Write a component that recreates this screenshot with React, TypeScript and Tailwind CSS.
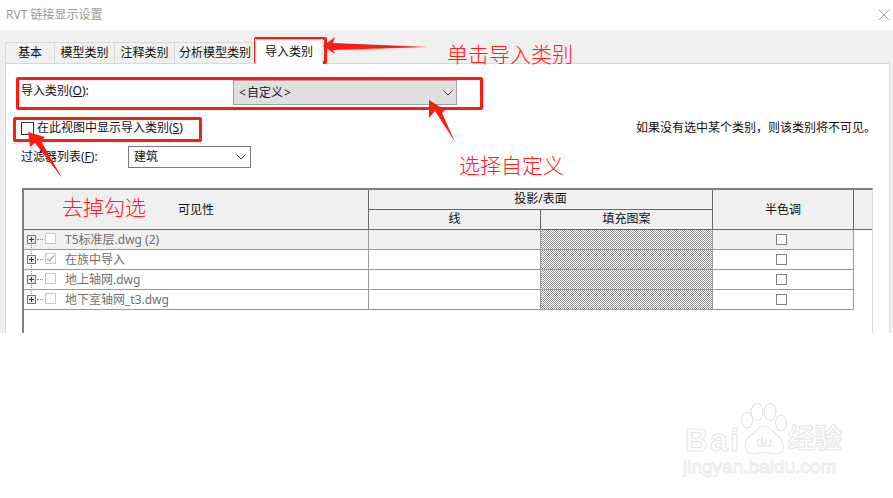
import React from 'react';

const cjk = "font-['Noto_Sans','Noto_Sans_CJK_SC',sans-serif]";

const rows = [
  { name: 'T5标准层.dwg (2)', checked: false, shaded: true },
  { name: '在族中导入', checked: true, shaded: false },
  { name: '地上轴网.dwg', checked: false, shaded: false },
  { name: '地下室轴网_t3.dwg', checked: false, shaded: false },
];

const Chevron = () => (
  <svg width="10" height="6" viewBox="0 0 10 6" fill="none" stroke="#444" strokeWidth="1">
    <path d="M0.5 0.5 L5 5 L9.5 0.5" />
  </svg>
);

const Tab = ({ label, w }: { label: string; w: string }) => (
  <div className={`${w} h-[21px] -mr-px flex items-center justify-center border border-b-0 border-[#d9d9d9] bg-[#f0f0f0] text-xs text-[#111]`}>
    {label}
  </div>
);

// one row of the category tree
const TreeRow = ({ name, checked, shaded, last }: { name: string; checked: boolean; shaded: boolean; last: boolean }) => (
  <div className={`grid grid-cols-[345px_172px_172px_141px] h-5 border-b border-[#999] ${shaded ? 'bg-[#f0f0f0]' : 'bg-white'}`}>
    <div className="relative flex items-center border-r border-[#999]">
      <div className={`absolute left-[7px] top-[6px] w-0 border-l border-dotted border-[#888] ${last ? 'h-[3px]' : 'h-5'}`} />
      <div className="relative ml-[3px] flex h-[9px] w-[9px] items-center justify-center border border-[#777] bg-[#e8e8f0]">
        <div className="absolute h-px w-[5px] bg-[#223a80]" />
        <div className="absolute h-[5px] w-px bg-[#223a80]" />
      </div>
      <div className="ml-px w-[6px] border-t border-dotted border-[#888]" />
      <div className="mb-[3px] ml-[2px] flex h-[11px] w-[11px] items-center justify-center border border-[#c8c8c8] bg-white">
        {checked && (
          <svg width="9" height="9" viewBox="0 0 9 9" fill="none" stroke="#b0b0b0" strokeWidth="1.4">
            <path d="M1 4.5 L3.5 7 L8 1.5" />
          </svg>
        )}
      </div>
      <span className="ml-[9px] text-xs text-[#707070]">{name}</span>
    </div>
    <div className="border-r border-[#999]" />
    <div className="border-r border-[#999] bg-[repeating-conic-gradient(#909090_0_25%,#ffffff_0_50%)] bg-[length:2px_2px]" />
    <div className="flex items-center justify-center border-r border-[#999]">
      <div className="mr-1 h-[11px] w-[11px] border border-[#808080] bg-white" />
    </div>
  </div>
);

export default function App() {
  return (
    <div className={`relative h-[498px] w-[893px] overflow-hidden bg-white ${cjk}`}>
      {/* title bar */}
      <div className="flex h-[30px] items-center justify-between pl-[6px] pr-[3px]">
        <span className="text-xs text-[#9a9a9a]">RVT 链接显示设置</span>
        <svg width="10" height="10" viewBox="0 0 10 10" stroke="#8c8c8c" strokeWidth="0.8" className="mr-px">
          <path d="M0 0 L10 10 M10 0 L0 10" />
        </svg>
      </div>

      {/* dialog body, cut off by the screenshot */}
      <div className="flex h-[303px] flex-col overflow-hidden bg-[#f0f0f0] pl-[5px] pr-[3px]">
        <div className="flex h-[33px] shrink-0 items-end">
          <Tab label="基本" w="w-[50px]" />
          <Tab label="模型类别" w="w-[61px]" />
          <Tab label="注释类别" w="w-[61px]" />
          <Tab label="分析模型类别" w="w-[82px]" />
          <div className="z-10 -mb-px flex h-[25px] w-[68px] items-center justify-center border border-b-0 border-[#d9d9d9] bg-white text-xs text-[#111]">
            导入类别
          </div>
        </div>

        <div className="min-h-0 flex-1 border border-b-0 border-[#d9d9d9] bg-white pl-[15px]">
          <div className="mt-[16px] flex h-[25px] items-start">
            <span className="w-[212px] pt-[3px] text-xs text-[#111]">
              导入类别(<u>O</u>):
            </span>
            <div className="flex h-[25px] w-[224px] items-center justify-between border border-[#a0a0a0] bg-[#e0e0e0] pl-[5px] pr-[3px] text-xs text-[#222]">
              <span>&lt;<span className="mx-px">自定义</span>&gt;</span>
              <Chevron />
            </div>
          </div>

          <div className="mt-[16px] flex h-[14px] items-center justify-between pr-[13px]">
            <div className="flex items-center">
              <div className="h-[13px] w-[13px] border border-[#333] bg-white" />
              <span className="ml-[3px] text-xs text-[#111]">
                在此视图中显示导入类别(<u>S</u>)
              </span>
            </div>
            <span className="text-xs text-[#111]">如果没有选中某个类别，则该类别将不可见。</span>
          </div>

          <div className="mt-[11px] flex h-[22px] items-center">
            <span className="w-[107px] text-xs text-[#111]">
              过滤器列表(<u>F</u>):
            </span>
            <div className="flex h-[22px] w-[123px] items-center justify-between border border-[#7a7a7a] bg-white pl-[5px] pr-[4px] text-xs text-[#111]">
              <span>建筑</span>
              <Chevron />
            </div>
          </div>

          {/* category table */}
          <div className="ml-px mt-[20px] h-[200px] w-[851px] border-l-2 border-r border-t-2 border-l-[#808080] border-r-[#dcdcdc] border-t-[#808080]">
            <div className="grid h-[40px] grid-cols-[345px_172px_172px_141px_1fr] grid-rows-2 border-b border-[#696969] bg-[#f0f0f0] text-xs text-[#111]">
              <div className="row-span-2 flex items-center justify-center border-r border-[#696969]">可见性</div>
              <div className="col-span-2 flex items-center justify-center border-b border-r border-[#696969]">投影/表面</div>
              <div className="row-span-2 flex items-center justify-center border-r border-[#696969]">半色调</div>
              <div className="row-span-2" />
              <div className="flex items-center justify-center border-r border-[#696969]">线</div>
              <div className="flex items-center justify-center border-r border-[#696969]">填充图案</div>
            </div>
            <div className="w-[830px]">
              {rows.map((r, i) => (
                <TreeRow key={r.name} {...r} last={i === rows.length - 1} />
              ))}
            </div>
          </div>
        </div>
      </div>

      {/* red annotations drawn over the screenshot */}
      <div className="absolute left-[254px] top-[37px] h-[27px] w-[73px] rounded-[2px] border-[3px] border-[#fb1c13]" />
      <div className="absolute left-[16px] top-[77px] h-[33px] w-[467px] rounded-[2px] border-[3px] border-[#fb1c13]" />
      <div className="absolute left-[13px] top-[117px] h-[25px] w-[189px] rounded-[2px] border-[3px] border-[#fb1c13]" />
      <svg className="absolute left-0 top-0" width="893" height="498" fill="#fb1c13">
        <polygon points="323,46 335,37 333,43 428,47 333,50 335,54" />
        <polygon points="429,100 445,110 442,113 455,142 435,111 429,118" />
        <polygon points="28,132 45,137 41,141 62,178 35,143 30,147" />
      </svg>
      <span className="absolute left-[447px] top-[39px] text-[21px] font-light leading-[30px] text-[#ff2018]">单击导入类别</span>
      <span className="absolute left-[459px] top-[150px] text-[21px] font-light leading-[30px] text-[#ff2018]">选择自定义</span>
      <span className="absolute left-[62px] top-[192px] text-[21px] font-light leading-[30px] text-[#ff2018]">去掉勾选</span>

      {/* baidu watermark */}
      <div className="absolute left-[685px] top-[403px] flex h-[52px] items-end">
        <span className="mb-[-1px] w-[55px] font-['Liberation_Sans',sans-serif] text-[32px] font-bold leading-[32px] tracking-[2px] text-transparent [-webkit-text-stroke:1px_#e6e6e6]">Bai</span>
        <svg width="48" height="52" viewBox="0 0 48 52" fill="#fff" stroke="#e6e6e6" strokeWidth="1.2">
          <ellipse cx="7" cy="17" rx="5.5" ry="8" />
          <ellipse cx="17" cy="9" rx="6" ry="8.5" />
          <ellipse cx="30" cy="9" rx="6" ry="8.5" />
          <ellipse cx="41" cy="20" rx="5.5" ry="8" />
          <path d="M24 23 C18 23 16 29 10 33 C3 38 3 51 14 51 C19 51 21 49 24 49 C27 49 30 51 35 51 C46 51 45 38 38 33 C32 29 30 23 24 23 Z" />
          <text x="24" y="44" fontSize="15" textAnchor="middle" fill="#e6e6e6" stroke="none" fontFamily="Liberation Sans">du</text>
        </svg>
        <span className="mb-[-1px] text-[27px] font-bold leading-[36px] text-transparent [-webkit-text-stroke:1px_#e6e6e6]">经验</span>
      </div>
      <span className="absolute left-[683px] top-[456px] font-['Liberation_Sans',sans-serif] text-[19px] leading-[22px] text-transparent [-webkit-text-stroke:1px_#ebebeb]">
        jingyan.baidu.com
      </span>
    </div>
  );
}
